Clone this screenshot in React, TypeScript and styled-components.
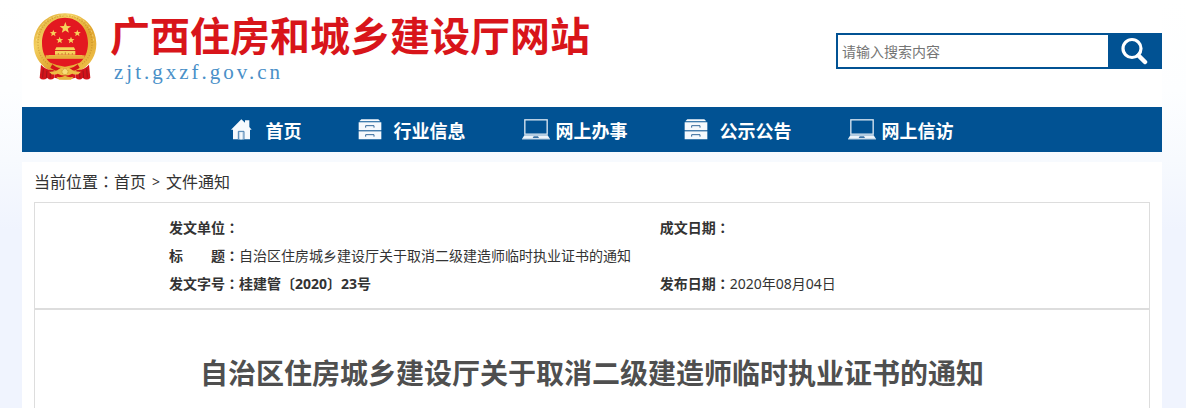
import React from 'react';
import styled, { createGlobalStyle } from 'styled-components';

const blue = '#015293';
const line = '#dddddd';

const GlobalStyle = createGlobalStyle`
  *, *::before, *::after { box-sizing: border-box; }
  body {
    margin: 0;
    color: #333333;
    font-family: "Noto Sans", "Noto Sans CJK SC", sans-serif;
    font-size: 14px;
    background: #f0f4fe linear-gradient(#ffffff 0, #fdfeff 90px, #f7fafe 160px, #f0f4fe 230px) no-repeat;
  }
  a { color: inherit; text-decoration: none; }
`;

const Page = styled.div`
  display: flex;
  flex-direction: column;
  min-height: 100vh;
  padding: 0 24px 0 22px;
`;

const Header = styled.header`
  display: flex;
  align-items: flex-start;
  justify-content: space-between;
  gap: 24px;
  padding: 12px 0 24px 11px;
  background: #ffffff;
`;

const Brand = styled.a`
  display: flex;
  align-items: flex-start;
  gap: 13px;
`;

const BrandText = styled.div`
  display: flex;
  flex-direction: column;
  gap: 6px;
`;

const SiteName = styled.span`
  color: #d8151a;
  font-family: "Noto Sans CJK SC", sans-serif;
  font-size: 40px;
  font-weight: 700;
  line-height: 44px;
  white-space: nowrap;
`;

const SiteAddress = styled.span`
  padding-left: 4px;
  color: #4a90c8;
  font-family: "Liberation Serif", serif;
  font-size: 21px;
  line-height: 21px;
  letter-spacing: 3px;
`;

const Search = styled.form`
  display: flex;
  flex: 0 1 326px;
  height: 36px;
  margin-top: 21px;
  border: 2px solid ${blue};
  background: ${blue};
`;

const SearchInput = styled.input`
  flex: 1;
  min-width: 0;
  padding: 0 4px;
  border: 0;
  outline: 0;
  background: #ffffff;
  color: #333333;
  font: 14px "Noto Sans", "Noto Sans CJK SC", sans-serif;
  &::placeholder { color: #757575; }
`;

const SearchButton = styled.button`
  display: flex;
  align-items: center;
  justify-content: center;
  width: 52px;
  padding: 0;
  border: 0;
  background: ${blue};
  cursor: pointer;
`;

const Nav = styled.nav`
  display: flex;
  align-items: center;
  justify-content: center;
  gap: 56px;
  height: 45px;
  background: ${blue};
`;

const NavLink = styled.a<{ $gap: number }>`
  display: flex;
  align-items: center;
  gap: ${(p) => p.$gap}px;
  color: #ffffff;
  font-family: "Noto Sans CJK SC", sans-serif;
  font-size: 18px;
  font-weight: 700;
  line-height: 24px;
  white-space: nowrap;
  svg { flex: none; }
`;

const Content = styled.main`
  display: flex;
  flex: 1;
  flex-direction: column;
  margin-top: 10px;
  padding: 0 12px;
  background: #ffffff;
`;

const Breadcrumb = styled.nav`
  display: flex;
  height: 40px;
  font-size: 16px;
  line-height: 40px;
`;

const Separator = styled.span`
  padding: 0 6px;
  font-size: 14px;
`;

/* Traditional Chinese form, which sits in the middle of its cell */
const Colon = styled.span.attrs({ lang: 'zh-TW' })`
  font-family: "Noto Sans CJK TC", sans-serif;
  line-height: 1;
`;

const InfoBox = styled.section`
  padding: 11px 12% 10px;
  border: 1px solid ${line};
`;

const InfoTable = styled.table`
  width: 100%;
  border-collapse: collapse;
  table-layout: fixed;
`;

const InfoCell = styled.td<{ $width?: string }>`
  width: ${(p) => p.$width ?? 'auto'};
  padding: 0;
  line-height: 28px;
  white-space: nowrap;
`;

const Article = styled.article`
  flex: 1;
  padding: 41px 12px 12px;
  border: 1px solid ${line};
  border-bottom: 0;
`;

const Title = styled.h1`
  margin: 0;
  color: #4f4f4f;
  font-family: "Noto Sans CJK SC", sans-serif;
  font-size: 28px;
  font-weight: 700;
  line-height: 42px;
  text-align: center;
`;

const star = (cx: number, cy: number, r: number) =>
  Array.from({ length: 10 }, (_, i) => {
    const a = (Math.PI / 5) * i - Math.PI / 2;
    const d = i % 2 ? r * 0.42 : r;
    return `${(cx + d * Math.cos(a)).toFixed(1)},${(cy + d * Math.sin(a)).toFixed(1)}`;
  }).join(' ');

const Emblem = () => (
  <svg width="64" height="69" viewBox="14 10 192 207" aria-hidden="true">
    <defs>
      <linearGradient id="gold" x1="0" y1="0" x2="1" y2="1">
        <stop offset="0" stopColor="#d9a02c" />
        <stop offset="0.3" stopColor="#f3cf5e" />
        <stop offset="0.6" stopColor="#e0a52f" />
        <stop offset="1" stopColor="#f2c650" />
      </linearGradient>
    </defs>
    <circle cx="110" cy="103" r="82" fill="#e31820" />
    <path fillRule="evenodd" d="M110 14 C164 14 204 54 204 106 C204 142 186 165 164 181 Q137 195 110 188 Q83 195 56 181 C34 165 16 142 16 106 C16 54 56 14 110 14Z M110 27 C70 27 41 60 41 103 C41 130 51 151 66 162 Q86 171 110 174 Q134 171 154 162 C169 151 179 130 179 103 C179 60 150 27 110 27Z" fill="url(#gold)" />
    <path d="M105 22 C60 24 29 58 29 104 C29 135 43 153 59 167 M115 22 C160 24 191 58 191 104 C191 135 177 153 161 167" fill="none" stroke="#ad7519" strokeWidth="4" strokeDasharray="3 5" opacity="0.45" />
    <path d="M105 19 C57 21 24 55 24 104 M115 19 C163 21 196 55 196 104" fill="none" stroke="#ffeaa0" strokeWidth="2" strokeDasharray="6 7" opacity="0.8" />
    <g fill="#f6d25c">
      <polygon points={star(111, 58, 18)} />
      <polygon points={star(75, 74, 11)} />
      <polygon points={star(147, 74, 11)} />
      <polygon points={star(94, 95, 11)} />
      <polygon points={star(128, 95, 11)} />
      <path d="M84 116 H137 L141 124 H80Z M80 127 H141 V138 H80Z M61 139 H162 V149 H54 V144 H61Z" />
      <path d="M52 140 H169 V150 H52Z" fill="#e6af3c" />
    </g>
    <path d="M82 125.500 H139 M90 133 V138 M101 133 V138 M111 131 V138 M121 133 V138 M132 133 V138" stroke="#b65b1d" strokeWidth="2" />
    <path d="M38 168 Q54 186 76 184 L78 208 Q66 217 57 208 Q44 217 34 208Z M182 168 Q166 186 144 184 L142 208 Q154 217 163 208 Q176 217 186 208Z" fill="#d3131a" />
    <path d="M45 180 L43 207 M56 186 L54 208 M67 188 L65 209 M175 180 L177 207 M164 186 L166 208 M153 188 L155 209" stroke="#94141a" strokeWidth="2.5" fill="none" />
    <path d="M72 167 Q84 178 97 178 L94 188 Q75 185 66 177Z M148 167 Q136 178 123 178 L126 188 Q145 185 154 177Z" fill="#d3131a" />
    <path d="M78 186 H142 V207 Q110 216 78 207Z" fill="#d3131a" />
    <path d="M62 189 Q84 190 93 180 Q110 170 127 180 Q136 190 158 189 L150 197 Q139 199 132 195 Q110 206 88 195 Q81 199 70 197Z" fill="#edbd45" />
    <circle cx="110" cy="189" r="9" fill="#f8dc78" stroke="#c98f2b" strokeWidth="3" strokeDasharray="3 2" />
    <path d="M84 204 Q98 208 110 201 Q122 208 136 204 L128 213 H92Z" fill="#e7b43d" />
  </svg>
);

const SearchIcon = () => (
  <svg width="28" height="28" viewBox="0 0 28 28" fill="none" stroke="#ffffff" aria-hidden="true">
    <circle cx="12" cy="11.500" r="9" strokeWidth="3.200" />
    <path d="M18.500 18.500 L25 25" strokeWidth="4.500" strokeLinecap="round" />
  </svg>
);

const HomeIcon = () => (
  <svg width="21" height="21" viewBox="0 0 63 63" aria-hidden="true">
    <path d="M0 32 L31 1 L42 11 V4 H55 V24 L62 32 H57 V61 H6 V32Z" fill="#f5f9fd" />
    <path d="M22 61 V37 H39 V61" fill="#c7d9e9" stroke="#4a80b0" strokeWidth="3" />
    <path d="M30.500 40 V61" stroke="#f5f9fd" strokeWidth="6" />
  </svg>
);

const CabinetIcon = () => (
  <svg width="24" height="21" viewBox="0 0 72 63" aria-hidden="true">
    <path d="M10 1 H61 L67 7 H4Z" fill="#f5f9fd" />
    <path d="M2 10 H70 V33 H2Z M2 37 H70 V61 H2Z" fill="#f5f9fd" />
    <path d="M23 26 V20 H48 V26 M23 53 V47 H48 V53" fill="none" stroke="#34699a" strokeWidth="3" />
    <path d="M2 35 H70" stroke="#5587b2" strokeWidth="3" />
  </svg>
);

const LaptopIcon = () => (
  <svg width="28" height="21" viewBox="0 0 84 63" aria-hidden="true">
    <rect x="8.500" y="2.500" width="67" height="43" fill="none" stroke="#dce8f2" strokeWidth="4" />
    <path d="M7 49 H77 L84 60 H0Z" fill="#edf4fa" />
    <path d="M0 60.500 H84" stroke="#8fb0cd" strokeWidth="3" />
    <path d="M35 52 H48 L51 57 H32Z" fill="#3a73a6" />
  </svg>
);

const navItems = [
  { label: '首页', Icon: HomeIcon, gap: 14 },
  { label: '行业信息', Icon: CabinetIcon, gap: 12 },
  { label: '网上办事', Icon: LaptopIcon, gap: 6 },
  { label: '公示公告', Icon: CabinetIcon, gap: 12 },
  { label: '网上信访', Icon: LaptopIcon, gap: 6 },
];

const Label = ({ children }: { children: React.ReactNode }) => (
  <b>{children}<Colon>：</Colon></b>
);

export default function App() {
  return (
    <>
      <GlobalStyle />
      <Page lang="zh-CN">
        <Header>
          <Brand href="#">
            <Emblem />
            <BrandText>
              <SiteName>广西住房和城乡建设厅网站</SiteName>
              <SiteAddress>zjt.gxzf.gov.cn</SiteAddress>
            </BrandText>
          </Brand>
          <Search role="search" onSubmit={(e) => e.preventDefault()}>
            <SearchInput type="text" aria-label="搜索" placeholder="请输入搜索内容" />
            <SearchButton type="submit" aria-label="搜索"><SearchIcon /></SearchButton>
          </Search>
        </Header>
        <Nav>
          {navItems.map(({ label, Icon, gap }) => (
            <NavLink key={label} href="#" $gap={gap}><Icon />{label}</NavLink>
          ))}
        </Nav>
        <Content>
          <Breadcrumb aria-label="当前位置">
            <span>当前位置<Colon>：</Colon></span>
            <a href="#">首页</a>
            <Separator>&gt;</Separator>
            <a href="#">文件通知</a>
          </Breadcrumb>
          <InfoBox>
            <InfoTable>
              <tbody>
                <tr>
                  <InfoCell $width="58%"><Label>发文单位</Label></InfoCell>
                  <InfoCell><Label>成文日期</Label></InfoCell>
                </tr>
                <tr>
                  <InfoCell colSpan={2}><Label>标　　题</Label>自治区住房城乡建设厅关于取消二级建造师临时执业证书的通知</InfoCell>
                </tr>
                <tr>
                  <InfoCell><Label>发文字号</Label><b>桂建管〔2020〕23号</b></InfoCell>
                  <InfoCell><Label>发布日期</Label>2020年08月04日</InfoCell>
                </tr>
              </tbody>
            </InfoTable>
          </InfoBox>
          <Article>
            <Title>自治区住房城乡建设厅关于取消二级建造师临时执业证书的通知</Title>
          </Article>
        </Content>
      </Page>
    </>
  );
}
